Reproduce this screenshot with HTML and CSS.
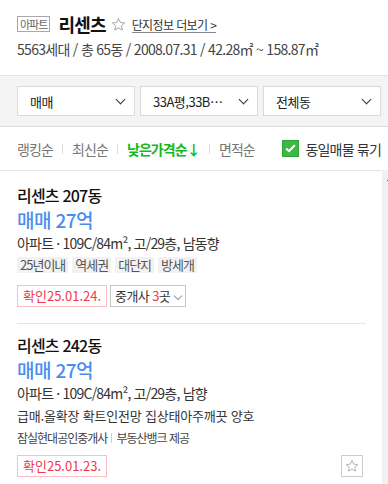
FILE: index.html
```html
<!DOCTYPE html>
<html lang="ko">
<head>
    <meta charset="UTF-8">
    <meta name="viewport" content="width=device-width, initial-scale=1.0">
    <title>리센츠</title>
    <link rel="stylesheet" href="styles.css">
</head>
<body>
    <div class="summary">
        <div class="summary-title">
            <span class="type-badge">아파트</span>
            <h1 class="complex-name">리센츠</h1>
            <svg class="fav-star" width="15" height="15" viewBox="0 0 24 24"><path d="M12 2.5l2.9 6.3 6.9.7-5.2 4.6 1.5 6.8L12 17.4l-6.1 3.5 1.5-6.8-5.2-4.6 6.9-.7z" fill="none" stroke="#999" stroke-width="1.4" stroke-linejoin="round"/></svg>
            <a class="more-link" href="#">단지정보 더보기 &gt;</a>
        </div>
        <p class="summary-info">5563세대 / 총 65동 / 2008.07.31 / 42.28㎡ ~ 158.87㎡</p>
    </div>

    <div class="filters">
        <div class="select"><span>매매</span><i class="chevron"></i></div>
        <div class="select"><span>33A평,33B⋯</span><i class="chevron"></i></div>
        <div class="select"><span>전체동</span><i class="chevron"></i></div>
    </div>

    <div class="sorts">
        <a class="sort" href="#">랭킹순</a>
        <span class="sort-sep"></span>
        <a class="sort" href="#">최신순</a>
        <span class="sort-sep"></span>
        <a class="sort active" href="#">낮은가격순↓</a>
        <span class="sort-sep"></span>
        <a class="sort" href="#">면적순</a>
        <label class="group-check">
            <span class="checkbox">
                <svg width="11" height="9" viewBox="0 0 11 9"><path d="M1.2 4.6l2.8 2.6 5.8-6" fill="none" stroke="#fff" stroke-width="2"/></svg>
            </span>
            동일매물 묶기
        </label>
    </div>

    <div class="list-wrap">
        <div class="list">
            <div class="item">
                <div class="item-title">리센츠 207동</div>
                <div class="item-price">매매 27억</div>
                <div class="item-spec">아파트 · 109C/84m², 고/29층, 남동향</div>
                <div class="tags">
                    <span class="tag">25년이내</span>
                    <span class="tag">역세권</span>
                    <span class="tag">대단지</span>
                    <span class="tag">방세개</span>
                </div>
                <div class="item-foot">
                    <div class="foot-left">
                        <span class="confirm">확인25.01.24.</span>
                        <span class="agents">중개사 <em>3</em>곳 <i class="chevron small"></i></span>
                    </div>
                </div>
            </div>
            <div class="item">
                <div class="item-title">리센츠 242동</div>
                <div class="item-price">매매 27억</div>
                <div class="item-spec">아파트 · 109C/84m², 고/29층, 남향</div>
                <div class="item-desc">급매.올확장 확트인전망 집상태아주깨끗 양호</div>
                <div class="item-agency">잠실현대공인중개사<span class="agency-sep"></span>부동산뱅크 제공</div>
                <div class="item-foot">
                    <div class="foot-left">
                        <span class="confirm">확인25.01.23.</span>
                    </div>
                    <button class="star-btn">
                        <svg width="14" height="14" viewBox="0 0 24 24"><path d="M12 2.5l2.9 6.3 6.9.7-5.2 4.6 1.5 6.8L12 17.4l-6.1 3.5 1.5-6.8-5.2-4.6 6.9-.7z" fill="none" stroke="#aaa" stroke-width="1.5" stroke-linejoin="round"/></svg>
                    </button>
                </div>
            </div>
        </div>
        <div class="scrollbar"><span class="thumb"></span></div>
    </div>
</body>
</html>
```

FILE: styles.css
```css
body {
    font-family: "Noto Sans CJK KR", "Noto Sans", sans-serif;
    margin: 0;
    padding: 0;
    width: 388px;
    background: #fff;
    color: #222;
}
a {
    color: inherit;
    text-decoration: none;
}
.summary {
    padding: 12px 17px 16px;
    border-bottom: 1px solid #e2e2e2;
}
.summary-title {
    display: flex;
    align-items: center;
    height: 24px;
}
.type-badge {
    font-size: 11px;
    line-height: 14px;
    color: #666;
    border: 1px solid #a8a8a8;
    padding: 0 2px;
    margin-right: 8px;
    letter-spacing: -1px;
}
.complex-name {
    margin: 0;
    font-size: 18px;
    font-weight: bold;
    color: #111;
    letter-spacing: -0.8px;
    line-height: 24px;
}
.fav-star {
    margin: 0 6px 0 5px;
}
.more-link {
    font-size: 12px;
    color: #333;
    letter-spacing: -0.6px;
    border-bottom: 1px solid #888;
    line-height: 15px;
    margin-top: 2px;
}
.summary-info {
    margin: 3px 0 0;
    font-size: 14px;
    line-height: 20px;
    color: #444;
    letter-spacing: -0.7px;
}
.filters {
    display: flex;
    gap: 5px;
    padding: 10px 7px 10px 17px;
    background: #f4f4f4;
    border-bottom: 1px solid #dcdcdc;
}
.select {
    flex: 1;
    height: 30px;
    box-sizing: border-box;
    background: #fff;
    border: 1px solid #dadada;
    display: flex;
    align-items: center;
    justify-content: space-between;
    padding: 0 10px 0 12px;
    font-size: 13px;
    color: #222;
    letter-spacing: -0.5px;
}
.chevron {
    width: 6px;
    height: 6px;
    border-right: 1.6px solid #333;
    border-bottom: 1.6px solid #333;
    transform: rotate(45deg);
    margin-top: -4px;
}
.chevron.small {
    display: inline-block;
    width: 5px;
    height: 5px;
    border-color: #999;
    border-width: 1px;
    margin: 0 0 3px 2px;
    vertical-align: middle;
}
.sorts {
    display: flex;
    align-items: center;
    height: 43px;
    padding: 0 7px 0 17px;
}
.sort {
    font-size: 14px;
    color: #777;
    letter-spacing: -0.9px;
}
.sort.active {
    color: #14b81e;
    font-weight: bold;
}
.sort-sep {
    width: 1px;
    height: 10px;
    background: #ddd;
    margin: 0 9px;
}
.group-check {
    margin-left: auto;
    display: flex;
    align-items: center;
    font-size: 14px;
    color: #333;
    letter-spacing: -0.8px;
}
.checkbox {
    width: 17px;
    height: 17px;
    box-sizing: border-box;
    background: #3cb944;
    border: 1px solid #2ea336;
    display: flex;
    align-items: center;
    justify-content: center;
    margin-right: 6px;
}
.list-wrap {
    display: flex;
}
.list {
    flex: 1;
    padding: 0 16px 0 17px;
    border-top: 1px solid #e6e6e6;
}
.scrollbar {
    width: 6px;
    background: #f1f1f1;
    position: relative;
}
.thumb {
    position: absolute;
    right: 0;
    top: 10px;
    width: 1px;
    height: 1px;
    background: #555;
}
.item {
    padding: 14px 0 16px;
    border-bottom: 1px solid #e5e5e5;
}
.item + .item {
    padding-top: 11px;
    border-bottom: none;
}
.item-title {
    font-size: 16px;
    line-height: 20px;
    font-weight: 500;
    color: #111;
    letter-spacing: -0.8px;
}
.item-price {
    margin-top: 2px;
    font-size: 19px;
    line-height: 26px;
    font-weight: 500;
    color: #4a8df0;
    letter-spacing: -0.6px;
}
.item-spec {
    font-size: 14px;
    line-height: 20px;
    color: #333;
    letter-spacing: -0.8px;
}
.tags {
    display: flex;
    gap: 4px;
    margin-top: 4px;
}
.tag {
    font-size: 13px;
    line-height: 16px;
    padding: 0 3px;
    background: #f2f2f2;
    color: #555;
    letter-spacing: -1px;
}
.item-desc {
    margin-top: 3px;
    font-size: 13px;
    line-height: 20px;
    color: #333;
    letter-spacing: -0.2px;
}
.item-agency {
    margin-top: 3px;
    font-size: 12px;
    line-height: 18px;
    color: #444;
    letter-spacing: -1px;
    display: flex;
    align-items: center;
}
.agency-sep {
    width: 1px;
    height: 10px;
    background: #ccc;
    margin: 0 4px;
}
.item-foot {
    display: flex;
    align-items: center;
    justify-content: space-between;
    margin-top: 12px;
}
.item + .item .item-foot {
    margin-top: 8px;
}
.foot-left {
    display: flex;
    gap: 3px;
}
.confirm {
    height: 22px;
    box-sizing: border-box;
    border: 1px solid #ffbcc5;
    color: #f2374c;
    font-size: 13px;
    line-height: 20px;
    padding: 0 5px;
    letter-spacing: 0;
}
.agents {
    height: 22px;
    box-sizing: border-box;
    border: 1px solid #c8c8c8;
    color: #333;
    font-size: 13px;
    line-height: 20px;
    padding: 0 4px;
    letter-spacing: -0.6px;
}
.agents em {
    font-style: normal;
    color: #f2374c;
}
.star-btn {
    width: 22px;
    height: 22px;
    padding: 0;
    background: #fff;
    border: 1px solid #ccc;
    display: flex;
    align-items: center;
    justify-content: center;
    margin-right: 3px;
}
```
